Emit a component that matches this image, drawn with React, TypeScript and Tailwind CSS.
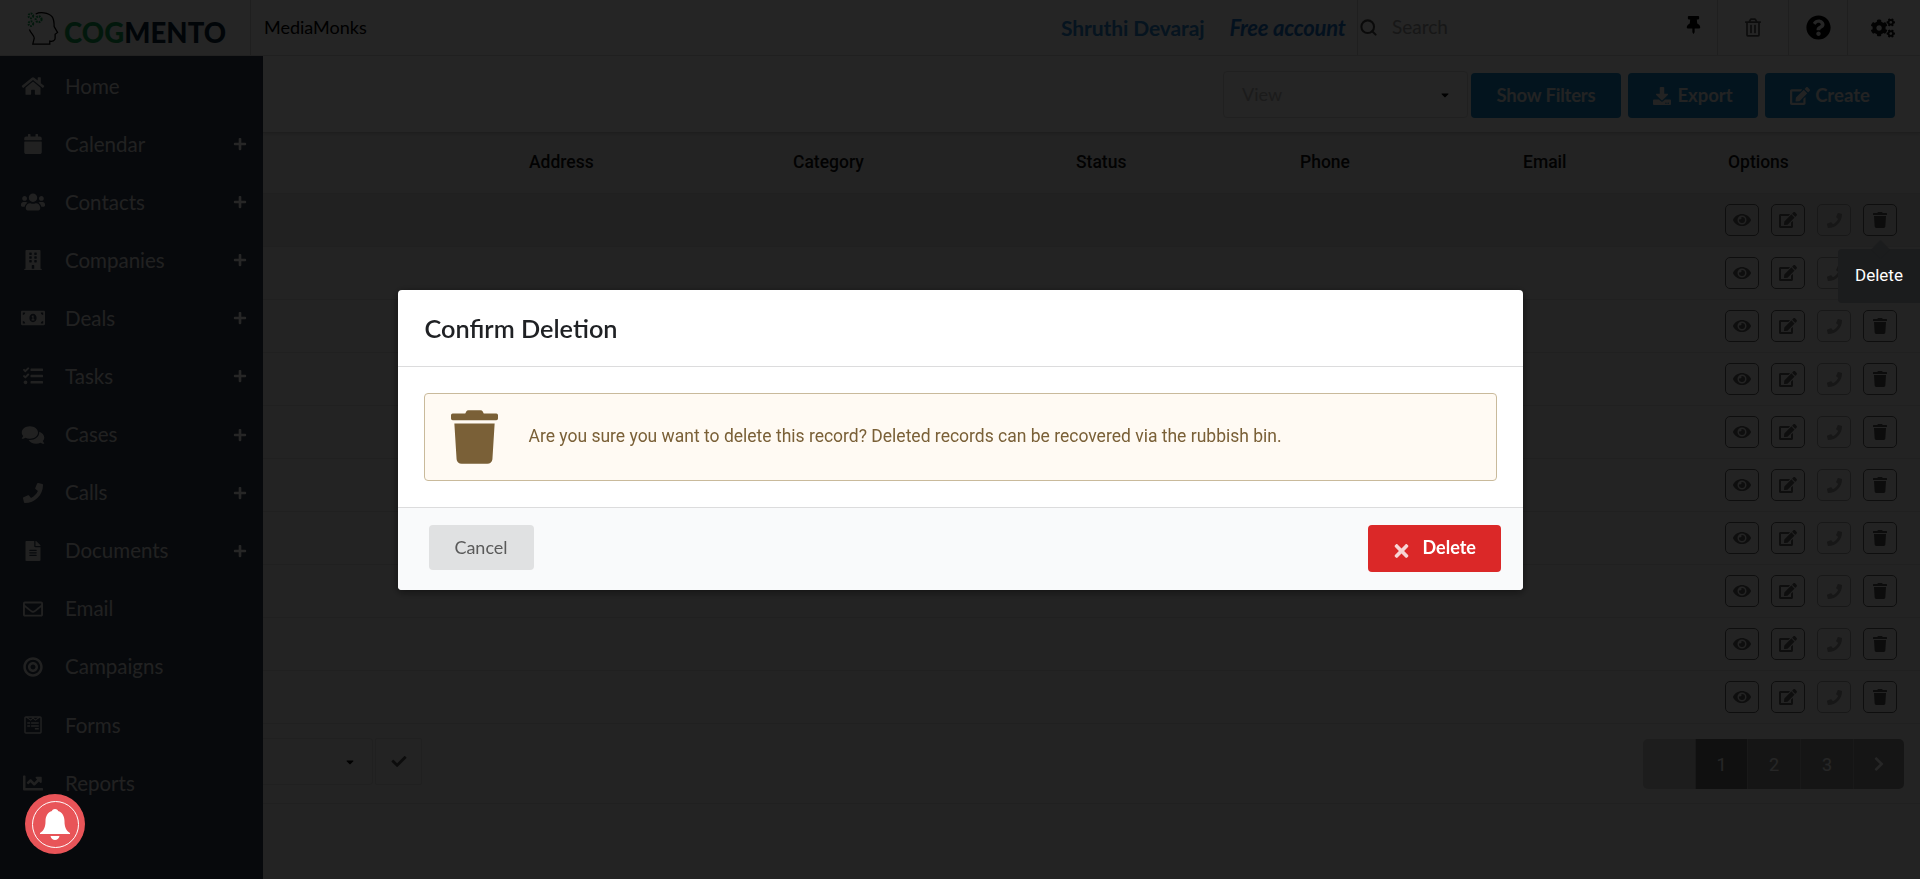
import React from "react";
import {
  FaHome, FaCalendar, FaUsers, FaBuilding, FaMoneyBillAlt, FaTasks, FaComments, FaPhone, FaFileAlt,
  FaRegEnvelope, FaBullseye, FaWpforms, FaChartLine, FaPlus, FaThumbtack, FaRegTrashAlt,
  FaQuestionCircle, FaCogs, FaEye, FaEdit, FaTrash, FaCheck, FaChevronRight, FaDownload, FaCaretDown, FaTimes,
} from "react-icons/fa";
import { Search } from "lucide-react";

const nav: [string, React.ComponentType<{ className?: string }>, boolean][] = [
  ["Home", FaHome, false],
  ["Calendar", FaCalendar, true],
  ["Contacts", FaUsers, true],
  ["Companies", FaBuilding, true],
  ["Deals", FaMoneyBillAlt, true],
  ["Tasks", FaTasks, true],
  ["Cases", FaComments, true],
  ["Calls", FaPhone, true],
  ["Documents", FaFileAlt, true],
  ["Email", FaRegEnvelope, false],
  ["Campaigns", FaBullseye, false],
  ["Forms", FaWpforms, false],
  ["Reports", FaChartLine, false],
];

const lato = "font-['Lato','Noto_Sans',sans-serif]";
const roboto = "font-['Roboto','Noto_Sans',sans-serif]";

function Logo() {
  return (
    <div className="flex items-end w-[250px] pl-[26px] h-full pb-[10px]">
      <svg viewBox="0 0 34 34" className="w-[33px] h-[33px] shrink-0" fill="none">
        <path d="M10 2 C14 0 23 0 27 5 C29 8 29 12 29 15 L32.5 21 L30 23 L30 27 C30 30 27 30.5 24.5 30 L24.5 33 L7 33 L8.5 27 C8.5 24 5 22 3.5 18" stroke="#000" strokeWidth="1.3" />
        <circle cx="5" cy="4" r="2.4" stroke="#12a150" strokeWidth="2" strokeDasharray="1.6 0.9" />
        <circle cx="13" cy="7.5" r="3" stroke="#12a150" strokeWidth="2.2" strokeDasharray="1.8 1" />
        <circle cx="5" cy="12" r="2.4" stroke="#12a150" strokeWidth="2" strokeDasharray="1.6 0.9" />
      </svg>
      <span className={`${lato} text-[27.5px] leading-[24px] font-black ml-[5px] tracking-[0.1px]`}>
        <span className="text-[#12a150]">COG</span>
        <span className="text-[#0b2239]">MENTO</span>
      </span>
    </div>
  );
}

function Header() {
  return (
    <header className={`${lato} h-[56px] flex items-stretch bg-[#f4f4f4] border-b border-[#dcdcdc] shrink-0`}>
      <Logo />
      <div className="border-l border-[#d0d0d0] pl-[13px] pt-[16px] text-[18px] leading-[22px] text-black w-[797px] shrink-0">MediaMonks</div>
      <div className="w-[310px] shrink-0 flex pt-[16px] leading-[24px]">
        <span className="ml-[14px] text-[21px] text-[#2a85d0] font-bold tracking-[-0.1px]">Shruthi Devaraj</span>
        <span className="ml-[25px] text-[22px] text-[#1a70c8] italic font-bold tracking-[-0.2px]">Free account</span>
      </div>
      <div className="border-l border-[#d0d0d0] w-[360px] shrink-0 flex items-center pl-[1px] pr-[16px]">
        <Search strokeWidth={2.6} className="w-[19px] h-[19px] text-[#444]" />
        <span className="ml-[14px] text-[19px] text-[#999] flex-1">Search</span>
        <FaThumbtack className="w-[15px] h-[18px] text-black mb-[5px]" />
      </div>
      <div className="w-[71px] border-l border-[#d0d0d0] flex items-center justify-center">
        <FaRegTrashAlt className="w-[16px] h-[19px] text-[#555]" />
      </div>
      <div className="w-[59px] border-l border-[#d0d0d0] flex items-center justify-center">
        <FaQuestionCircle className="w-[25px] h-[25px] text-black" />
      </div>
      <div className="flex-1 border-l border-[#d0d0d0] flex items-center justify-center pr-[2px]">
        <FaCogs className="w-[24px] h-[22px] text-[#111]" />
      </div>
    </header>
  );
}

function Sidebar() {
  return (
    <aside className={`${lato} w-[263px] shrink-0 bg-[#2f3c50] pt-[1px]`}>
      {nav.map(([label, Icon, plus]) => (
        <div key={label} className="h-[58.08px] flex items-center text-[#dcdcdc]">
          <div className="w-[65px] flex justify-center">
            <Icon className="w-[24px] h-[20px]" />
          </div>
          <span className="text-[20.5px] flex-1 font-normal">{label}</span>
          {plus && <FaPlus className="w-[14px] h-[14px] mr-[16px] text-white" />}
        </div>
      ))}
    </aside>
  );
}

function SmallBtn({ children, faint }: { children: React.ReactNode; faint?: boolean }) {
  return (
    <div className={`h-[32px] w-[34px] rounded-[5px] border flex items-center justify-center ${faint ? "border-[#a0a0a0] text-[#999]" : "border-[#606060]"}`}>
      {children}
    </div>
  );
}

function Row({ hover }: { hover?: boolean }) {
  return (
    <div className={`h-[53px] border-b border-[#d4d4d4] flex items-center justify-end pr-[23px] gap-[12px] ${hover ? "bg-[#dcdcdc]" : ""}`}>
      <SmallBtn><FaEye className="w-[18px] h-[16px] text-[#5f5f5f]" /></SmallBtn>
      <SmallBtn><FaEdit className="w-[18px] h-[16px] text-[#5f5f5f]" /></SmallBtn>
      <SmallBtn faint><FaPhone className="w-[15px] h-[15px]" /></SmallBtn>
      <SmallBtn><FaTrash className="w-[14px] h-[16px] text-[#505050]" /></SmallBtn>
    </div>
  );
}

function Toolbar() {
  return (
    <div className={`${lato} h-[77px] bg-[#f4f4f4] border-b border-[#c8c8c8] flex items-start justify-end pt-[17px] pr-[25px] shadow-[0_1px_3px_rgba(0,0,0,0.12)] relative`}>
      <div className="w-[245px] h-[47px] -mt-[2px] border border-[#d8d8d8] rounded-[4px] flex items-center justify-between pl-[18px] pr-[17px] text-[#b5b5b5] text-[18px] mr-[3px]">
        View
        <FaCaretDown className="w-[10px] h-[12px] text-black" />
      </div>
      <div className="h-[45px] flex gap-[7px] text-[#e6e6e6] font-bold text-[18.5px]">
        <div className="w-[150px] rounded-[4px] bg-[#1485c8] flex items-center justify-center tracking-[-0.2px]">Show Filters</div>
        <div className="w-[130px] rounded-[4px] bg-[#1485c8] flex items-center justify-center gap-[6px]"><FaDownload className="w-[18px] h-[18px]" />Export</div>
        <div className="w-[130px] rounded-[4px] bg-[#1485c8] flex items-center justify-center gap-[5px]"><FaEdit className="w-[20px] h-[18px]" />Create</div>
      </div>
    </div>
  );
}

function TableHead() {
  const cols: [string, string][] = [
    ["Address", "w-[264px]"], ["Category", "w-[283px]"], ["Status", "w-[224px]"],
    ["Phone", "w-[223px]"], ["Email", "w-[205px]"], ["Options", ""],
  ];
  return (
    <div className={`${roboto} h-[61px] flex items-center pl-[266px] border-b border-[#d4d4d4] text-[17.5px] font-medium text-[#111] pb-[2px]`}>
      {cols.map(([c, w]) => <div key={c} className={w}>{c}</div>)}
    </div>
  );
}

function Footer() {
  return (
    <div className={`${roboto} h-[80px] border-b border-[#d4d4d4] flex justify-between pr-[16px] pt-[14px]`}>
      <div className="flex gap-[2px] h-[47px]">
        <div className="w-[110px] border border-l-0 border-[#d4d4d4] rounded-r-[4px] flex items-center justify-end pr-[17px]">
          <FaCaretDown className="w-[10px] h-[12px] text-black" />
        </div>
        <div className="w-[47px] border border-[#d4d4d4] rounded-[2px] flex items-center justify-center">
          <FaCheck className="w-[18px] h-[15px] text-[#555]" />
        </div>
      </div>
      <div className="flex h-[50px] text-[18px] text-white rounded-[5px] overflow-hidden mt-[1px]">
        <div className="w-[52px] bg-[#c0c0c0]" />
        <div className="w-[52px] bg-[#6b6b6b] border-l border-[#aaa] flex items-center justify-center">1</div>
        <div className="w-[53px] bg-[#909090] border-l border-[#aaa] flex items-center justify-center">2</div>
        <div className="w-[53px] bg-[#909090] border-l border-[#aaa] flex items-center justify-center">3</div>
        <div className="w-[51px] bg-[#909090] border-l border-[#aaa] flex items-center justify-center"><FaChevronRight className="w-[12px] h-[16px]" /></div>
      </div>
    </div>
  );
}

function Modal() {
  return (
    <div className="w-[1125px] h-[300px] bg-white rounded-[4px] shadow-[0_2px_8px_rgba(0,0,0,0.5)] flex flex-col overflow-hidden">
      <div className={`${lato} h-[77px] border-b border-[#dcdcdd] pl-[27px] pt-[2px] flex items-center text-[25.3px] font-semibold text-[#1f2124]`}>Confirm Deletion</div>
      <div className="flex-1 px-[26px] pt-[26px]">
        <div className="h-[88px] bg-[#fffaf3] border border-[#c9ba9b] rounded-[4px] flex items-center pl-[26px]">
          <FaTrash className="w-[47px] h-[54px] text-[#7a6037]" />
          <span className={`${roboto} ml-[31px] text-[17.5px] text-[#7a6037]`}>Are you sure you want to delete this record? Deleted records can be recovered via the rubbish bin.</span>
        </div>
      </div>
      <div className={`${lato} h-[83px] bg-[#f9fafb] border-t border-[#dcdcdd] flex justify-between items-start pt-[17px] pl-[31px] pr-[22px]`}>
        <div className="w-[105px] h-[45px] rounded-[4px] bg-[#e0e1e2] text-[#5a5a5a] text-[18px] flex items-center justify-center">Cancel</div>
        <div className="w-[133px] h-[47px] rounded-[4px] bg-[#db2828] text-white text-[18px] font-bold flex items-center pl-[24px]">
          <FaTimes className="w-[19px] h-[20px] opacity-80 mt-[6px]" />
          <span className="ml-[12px] -mt-[1px]">Delete</span>
        </div>
      </div>
    </div>
  );
}

export default function App() {
  return (
    <div className="relative h-screen overflow-hidden bg-[#e8e8e8]">
      <Header />
      <div className="flex h-[823px]">
        <Sidebar />
        <main className="flex-1 min-w-0">
          <Toolbar />
          <TableHead />
          {Array.from({ length: 10 }).map((_, i) => <Row key={i} hover={i === 0} />)}
          <Footer />
        </main>
      </div>

      <div className="fixed inset-0 bg-black/85 flex items-center justify-center">
        <Modal />
      </div>

      <div className={`${roboto} absolute left-[1838px] top-[249px] w-[82px] h-[54px] bg-[#1b1c1d] rounded-l-[4px] text-white text-[17px] flex items-center pl-[17px]`}>
        Delete
        <div className="absolute left-[36px] -top-[6px] w-[13px] h-[13px] rotate-45 bg-[#1b1c1d]" />
      </div>

      <div className="absolute left-[25px] top-[794px] w-[60px] h-[60px] rounded-full bg-[#e85458] flex items-center justify-center">
        <div className="w-[47px] h-[47px] rounded-full border-[1.5px] border-white flex items-center justify-center">
          <svg viewBox="0 0 30 31" className="w-[30px] h-[31px]" fill="#fff">
            <path d="M15 0 C17 0 18 1 18 2 C22 3 24.5 7 24.5 12 C24.5 18 26 21.5 30 24 L30 25 L0 25 L0 24 C4 21.5 5.5 18 5.5 12 C5.5 7 8 3 12 2 C12 1 13 0 15 0 Z" />
            <path d="M10.5 27 L19.5 27 C19 29.5 17 31 15 31 C13 31 11 29.5 10.5 27 Z" />
          </svg>
        </div>
      </div>
    </div>
  );
}
